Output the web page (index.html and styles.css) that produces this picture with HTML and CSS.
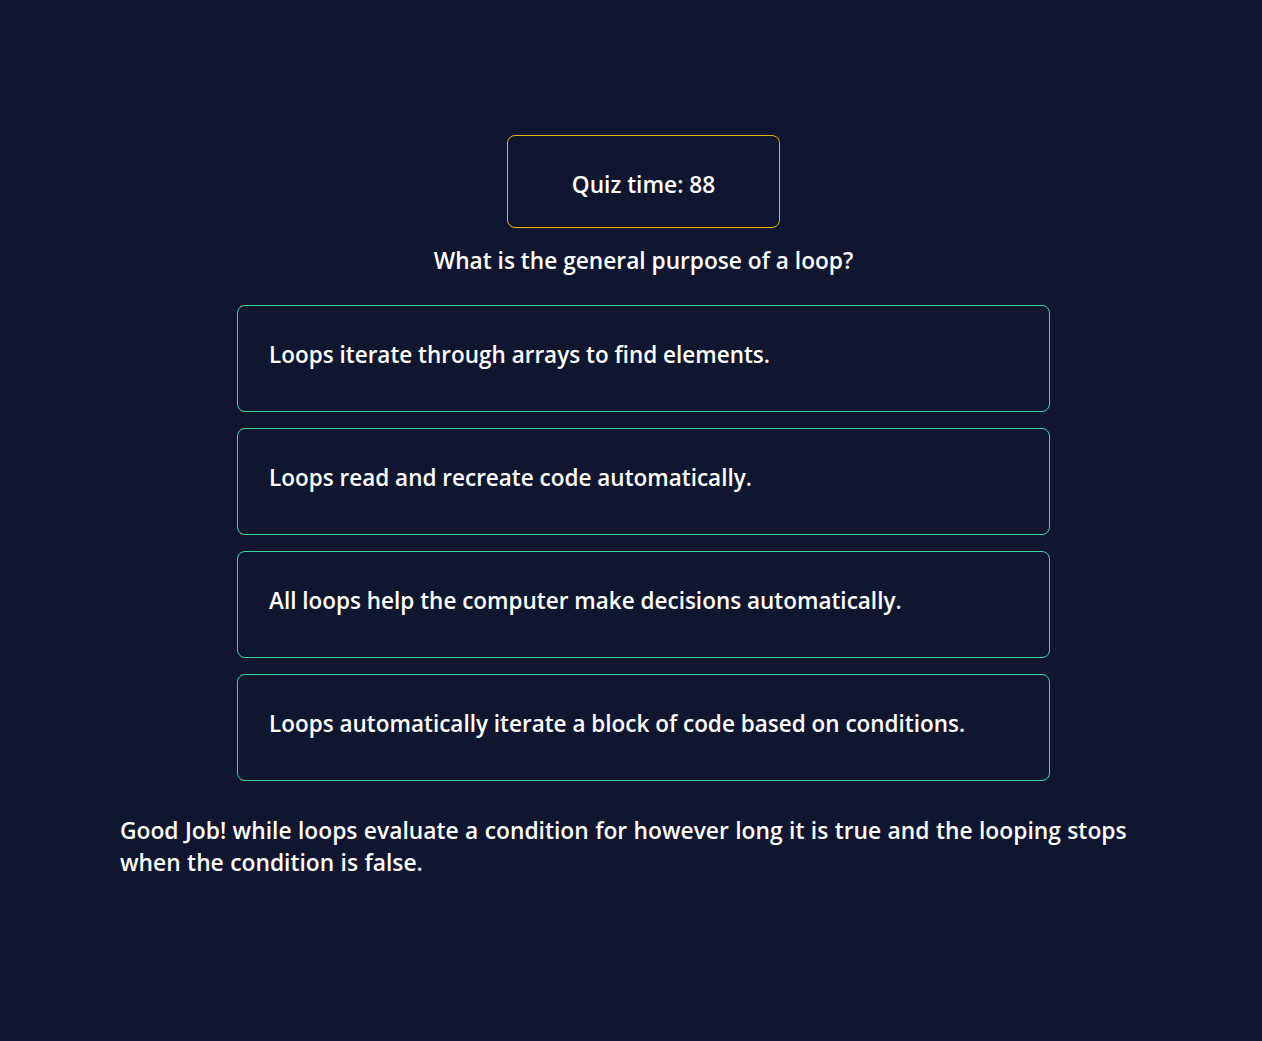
FILE: index.html
```html
<!DOCTYPE html>
<html lang="en">
<head>
<meta charset="utf-8">
<title>Quiz</title>
<link rel="stylesheet" href="styles.css">
</head>
<body>
<main class="quiz">
  <div class="timer">Quiz time: 88</div>
  <h2 class="question">What is the general purpose of a loop?</h2>
  <div class="options">
    <button class="option">Loops iterate through arrays to find elements.</button>
    <button class="option">Loops read and recreate code automatically.</button>
    <button class="option">All loops help the computer make decisions automatically.</button>
    <button class="option">Loops automatically iterate a block of code based on conditions.</button>
  </div>
  <p class="feedback">Good Job! while loops evaluate a condition for however long it is true and the looping stops when the condition is false.</p>
</main>
</body>
</html>
```
FILE: styles.css
```css
html, body {
  margin: 0;
  padding: 0;
  background: #111630;
  height: 100%;
}
body {
  font-family: "Open Sans", "Noto Sans", sans-serif;
  color: #ffffff;
  font-weight: 600;
}
.quiz {
  display: flex;
  flex-direction: column;
  align-items: center;
  padding: 135px 95px 0 120px;
}
.timer {
  box-sizing: border-box;
  width: 273px;
  height: 93px;
  border: 1px solid #eab308;
  border-radius: 8px;
  display: flex;
  align-items: center;
  justify-content: center;
  font-size: 22.7px;
  padding-top: 5px;
}
.question {
  margin: 17px 0 0;
  font-size: 22.7px;
  font-weight: 600;
  line-height: 32px;
}
.options {
  margin-top: 28px;
  display: flex;
  flex-direction: column;
  gap: 16px;
  width: 813px;
}
.option {
  box-sizing: border-box;
  height: 107px;
  background: transparent;
  border: 1px solid #3dd3a0;
  border-radius: 8px;
  color: #ffffff;
  font-family: inherit;
  font-weight: 600;
  font-size: 22.5px;
  text-align: left;
  padding: 0 31px 9px;
  display: flex;
  align-items: center;
}
.feedback {
  align-self: stretch;
  margin: 34px 0 0;
  font-size: 22.8px;
  word-spacing: 0.5px;
  line-height: 32px;
}
```
